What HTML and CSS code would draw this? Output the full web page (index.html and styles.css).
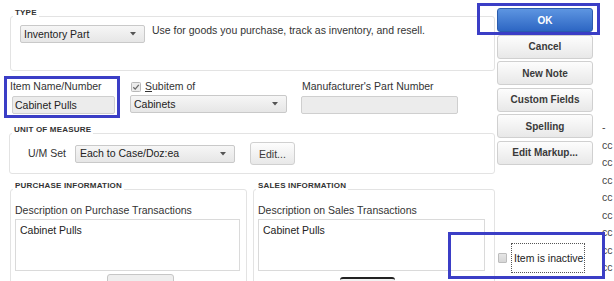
FILE: index.html
```html
<!DOCTYPE html>
<html lang="en">
<head>
    <meta charset="UTF-8">
    <title>New Item - Inventory Part</title>
    <link rel="stylesheet" href="styles.css">
</head>
<body>
    <div class="dialog">
        <div class="main">
            <fieldset class="group group-type">
                <legend>TYPE</legend>
                <div class="type-row">
                    <div class="combo combo-type">
                        <span>Inventory Part</span>
                        <svg class="arrow" width="6" height="4" viewBox="0 0 6 4"><path d="M0 0H6L3 3.5Z" fill="#555"/></svg>
                    </div>
                    <p class="type-note">Use for goods you purchase, track as inventory, and resell.</p>
                </div>
            </fieldset>

            <div class="item-row">
                <div class="field field-name">
                    <label>Item Name/Number</label>
                    <div class="textbox">Cabinet Pulls</div>
                </div>
                <div class="field field-sub">
                    <label class="check">
                        <svg width="10" height="10" viewBox="0 0 10 10">
                            <rect x="0.5" y="0.5" width="9" height="9" rx="1" fill="#ececec" stroke="#b8b8b8"/>
                            <path d="M2.3 5.2L4.2 7.1L7.8 2.8" fill="none" stroke="#6a6a6a" stroke-width="1.3"/>
                        </svg>
                        <span><u>S</u>ubitem of</span>
                    </label>
                    <div class="combo combo-sub">
                        <span>Cabinets</span>
                        <svg class="arrow" width="6" height="4" viewBox="0 0 6 4"><path d="M0 0H6L3 3.5Z" fill="#555"/></svg>
                    </div>
                </div>
                <div class="field field-mpn">
                    <label>Manufacturer's Part Number</label>
                    <div class="textbox"></div>
                </div>
            </div>

            <fieldset class="group group-uom">
                <legend>UNIT OF MEASURE</legend>
                <div class="uom-row">
                    <span class="uom-label">U/M Set</span>
                    <div class="combo combo-uom">
                        <span>Each to Case/Doz:ea</span>
                        <svg class="arrow" width="6" height="4" viewBox="0 0 6 4"><path d="M0 0H6L3 3.5Z" fill="#555"/></svg>
                    </div>
                    <button class="btn btn-edit">Edit...</button>
                </div>
            </fieldset>

            <div class="info-row">
                <fieldset class="group group-purchase">
                    <legend>PURCHASE INFORMATION</legend>
                    <div class="desc">
                        <label>Description on Purchase Transactions</label>
                        <div class="memo">Cabinet Pulls</div>
                        <div class="stub stub-purchase"></div>
                    </div>
                </fieldset>
                <fieldset class="group group-sales">
                    <legend>SALES INFORMATION</legend>
                    <div class="desc">
                        <label>Description on Sales Transactions</label>
                        <div class="memo memo-sales">Cabinet Pulls</div>
                        <div class="stub stub-sales"></div>
                    </div>
                </fieldset>
            </div>
        </div>

        <div class="side">
            <button class="btn btn-side btn-ok">OK</button>
            <button class="btn btn-side">Cancel</button>
            <button class="btn btn-side">New Note</button>
            <button class="btn btn-side">Custom Fields</button>
            <button class="btn btn-side">Spellin<u>g</u></button>
            <button class="btn btn-side">Edit Markup...</button>

            <div class="inactive">
                <span class="box"></span>
                <span class="inactive-label">Item is inactive</span>
            </div>
        </div>

        <!-- edge of the list window behind the dialog -->
        <div class="behind">
            <div>-</div>
            <div>cc</div>
            <div>cc</div>
            <div>cc</div>
            <div>cc</div>
            <div>cc</div>
            <div>cc</div>
            <div>cc</div>
            <div>cc</div>
        </div>

        <!-- highlight marks drawn over the screenshot -->
        <div class="mark mark-name"></div>
        <div class="mark mark-ok"></div>
        <div class="mark mark-inactive"></div>
    </div>
</body>
</html>
```

FILE: styles.css
```css
body {
    margin: 0;
    padding: 0;
    background-color: #fff;
    font-family: 'Liberation Sans', Arial, sans-serif;
    font-size: 10.5px;
    line-height: 13px;
    color: #333;
}

.dialog {
    position: relative;
    display: flex;
    width: 614px;
    height: 281px;
    overflow: hidden;
    background-color: #fff;
}

.main {
    width: 497px;
    flex-shrink: 0;
    padding-top: 8px;
    box-sizing: border-box;
}

/* group boxes */
.group {
    margin: 0;
    padding: 0;
    min-width: 0;
    border: 1px solid #e3e3e3;
    border-radius: 3px;
    box-sizing: border-box;
}

.group legend {
    margin-left: 2px;
    padding: 0 2px 6px 2px;
    font-size: 8px;
    line-height: 10px;
    font-weight: bold;
    letter-spacing: 0.2px;
    color: #333;
}

.group-type {
    margin-left: 10px;
    width: 485px;
    height: 63px;
}

.type-row {
    display: flex;
    align-items: flex-start;
    padding: 1px 0 0 9px;
}

.type-note {
    margin: -1px 0 0 7px;
    font-size: 10.5px;
}

/* combo boxes and text boxes */
.combo {
    display: flex;
    align-items: center;
    justify-content: space-between;
    height: 18px;
    padding: 0 8px 0 3px;
    box-sizing: border-box;
    background: linear-gradient(#f6f6f6, #e6e6e6);
    border: 1px solid #c9c9c9;
    border-radius: 2px;
    color: #222;
}

.combo .arrow {
    flex-shrink: 0;
}

.combo-type {
    width: 125px;
}

.combo-sub {
    width: 157px;
    margin-top: -1px;
}

.combo-uom {
    width: 160px;
    padding-left: 4px;
}

.textbox {
    height: 18px;
    padding: 0 2px;
    box-sizing: border-box;
    background-color: #ececec;
    border: 1px solid #cfcfcf;
    border-radius: 2px;
    line-height: 16px;
    color: #222;
}

/* item name row */
.item-row {
    display: flex;
    margin-top: 9px;
}

.field label {
    display: block;
    height: 13px;
    margin-bottom: 3px;
}

.field-name {
    width: 112px;
    margin-left: 10px;
}

.field-name .textbox {
    width: 103px;
    margin-left: 2px;
}

.field-sub {
    width: 157px;
    margin-left: 8px;
}

.field .check {
    display: flex;
    align-items: center;
}

.check svg {
    margin: 0 4px 0 1px;
}

.field-mpn {
    width: 157px;
    margin-left: 14px;
}

.field-mpn label {
    padding-left: 1px;
}

/* unit of measure */
.group-uom {
    margin: 11px 0 0 9px;
    width: 486px;
    height: 49px;
}

.uom-row {
    display: flex;
    align-items: center;
    padding: 1px 0 0 18px;
}

.uom-label {
    margin-right: 9px;
}

/* buttons */
.btn {
    font-family: 'Liberation Sans', Arial, sans-serif;
    font-size: 10.5px;
    color: #3a3a3a;
    padding: 0;
    background: linear-gradient(#fdfdfd, #e8e8e8);
    border: 1px solid #d0d0d0;
    border-radius: 3px;
    box-sizing: border-box;
}

.btn-edit {
    width: 45px;
    height: 23px;
    margin-left: 15px;
}

.side {
    width: 96px;
    flex-shrink: 0;
    padding-top: 8px;
}

.btn-side {
    display: block;
    width: 96px;
    height: 24px;
    margin-bottom: 2.5px;
    font-size: 10px;
    font-weight: bold;
}

.btn-ok {
    background: linear-gradient(#5d95e1, #2d66c3);
    border-color: #2b5cae;
    color: #fff;
}

.inactive {
    display: flex;
    align-items: center;
    margin-top: 78px;
}

.inactive .box {
    width: 9px;
    height: 10px;
    margin-left: 1px;
    flex-shrink: 0;
    background: linear-gradient(#e6e6e6, #d6d6d6);
    border: 1px solid #bdbdbd;
    border-radius: 1px;
    box-sizing: border-box;
}

.inactive-label {
    height: 30px;
    margin-left: 4px;
    padding: 0 1px 0 2px;
    border: 1px dotted #555;
    box-sizing: border-box;
    white-space: nowrap;
    line-height: 28px;
    font-size: 10.5px;
    color: #222;
}

/* purchase and sales */
.info-row {
    display: flex;
    gap: 6px;
    margin: 7px 0 0 10px;
}

.group-purchase {
    width: 237px;
    height: 110px;
}

.group-sales {
    width: 242px;
    height: 110px;
}

.desc {
    padding: 7px 0 0 4px;
}

.desc label {
    display: block;
    margin-bottom: 2px;
}

.memo {
    width: 225px;
    height: 52px;
    padding: 4px 4px;
    box-sizing: border-box;
    border: 1px solid #dadada;
    background-color: #fff;
    color: #222;
}

.memo-sales {
    width: 227px;
}

.stub {
    height: 10px;
    box-sizing: border-box;
    border-radius: 3px 3px 0 0;
}

.stub-purchase {
    width: 67px;
    margin: 3px 0 0 92px;
    border: 1px solid #c6c6c6;
    background-color: #eee;
}

.stub-sales {
    width: 55px;
    margin: 6px 0 0 82px;
    border-top: 2px solid #222;
    background-color: #f2f2f2;
}

/* window behind */
.behind {
    flex: 1;
    padding: 119px 0 0 9px;
    font-size: 10.5px;
    line-height: 17.5px;
    color: #444;
}

.mark {
    position: absolute;
    border: 3px solid #3b3ec6;
    box-sizing: border-box;
    pointer-events: none;
}

.mark-name {
    left: 4px;
    top: 76px;
    width: 116px;
    height: 42px;
}

.mark-ok {
    left: 477px;
    top: 3px;
    width: 123px;
    height: 32px;
}

.mark-inactive {
    left: 448px;
    top: 232px;
    width: 157px;
    height: 47px;
}
```
